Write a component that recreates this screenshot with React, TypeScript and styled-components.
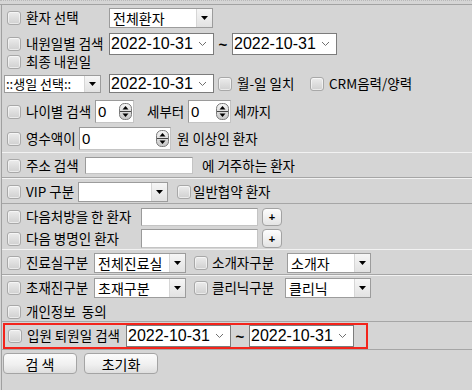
import React from 'react';
import styled, { createGlobalStyle } from 'styled-components';

const Global = createGlobalStyle`
  html, body { margin: 0; padding: 0; background: #d5d5d5; }
  body {
    font-family: "Noto Sans CJK KR", "Noto Sans", sans-serif;
    font-size: 13px;
    color: #000;
  }
`;

const Frame = styled.div`
  width: 472px;
  height: 390px;
  overflow: hidden;
`;

const TopRule = styled.div`
  height: 5px;
  box-sizing: border-box;
  border-top: 1px dotted #b8b8b8;
  border-bottom: 1px solid #a2a2a2;
`;

const Body = styled.div`
  margin-left: 1px;
  border-left: 1px solid #a0a0a0;
  height: 385px;
  display: flex;
  flex-direction: column;
`;

const Row = styled.div<{ $mt: number; $h: number }>`
  display: flex;
  align-items: center;
  flex: none;
  margin-top: ${p => p.$mt}px;
  height: ${p => p.$h}px;
`;

const Sep = styled.div<{ $mt: number; $tone: 'light' | 'groove' | 'dark' }>`
  flex: none;
  margin-top: ${p => p.$mt}px;
  height: 0;
  border-top: 1px solid ${p => (p.$tone === 'light' ? '#f2f2f2' : '#a6a6a6')};
  border-bottom: ${p => (p.$tone === 'groove' ? '1px solid #f2f2f2' : '0')};
`;

const Checkbox = styled.span<{ $ml?: number }>`
  flex: none;
  display: inline-block;
  width: 14px;
  height: 14px;
  box-sizing: border-box;
  margin-left: ${p => p.$ml ?? 5}px;
  border: 1px solid #a8a8a8;
  border-radius: 3px;
  background: linear-gradient(#ececec, #d0d0d0);
  box-shadow: inset 0 0 0 1px rgba(255, 255, 255, 0.55);
`;

const Label = styled.span<{ $w?: number; $ml?: number }>`
  flex: none;
  margin-left: ${p => p.$ml ?? 5}px;
  width: ${p => (p.$w ? `${p.$w}px` : 'auto')};
  font-size: 13.5px;
  line-height: 1;
  white-space: pre;
`;

const SelectBox = styled.div<{ $w: number; $h: number; $ml?: number }>`
  flex: none;
  display: flex;
  align-items: stretch;
  box-sizing: border-box;
  width: ${p => p.$w}px;
  height: ${p => p.$h}px;
  margin-left: ${p => p.$ml ?? 0}px;
  border: 1px solid #9c9c9c;
  background: #fff;
`;

const SelectText = styled.span<{ $size: number; $pl: number }>`
  flex: 1;
  display: flex;
  align-items: center;
  padding-left: ${p => p.$pl}px;
  font-size: ${p => p.$size}px;
  white-space: nowrap;
  overflow: hidden;
`;

const SelectBtn = styled.span`
  flex: none;
  width: 15px;
  display: flex;
  align-items: center;
  justify-content: center;
  border-left: 1px solid #d6d6d6;
  background: linear-gradient(#f6f6f6, #e2e2e2);
`;

const DateBox = styled.div<{ $w: number; $h: number; $ml?: number }>`
  flex: none;
  display: flex;
  align-items: center;
  box-sizing: border-box;
  width: ${p => p.$w}px;
  height: ${p => p.$h}px;
  margin-left: ${p => p.$ml ?? 0}px;
  padding-left: 1px;
  border: 1px solid #7c7c7c;
  background: #fff;
  font-family: "Liberation Sans", Arial, sans-serif;
  font-size: 16px;
`;

const DateText = styled.span`
  flex: 1;
  white-space: nowrap;
`;

const Tilde = styled.span<{ $w: number }>`
  flex: none;
  width: ${p => p.$w}px;
  text-align: center;
  font-family: "Liberation Sans", Arial, sans-serif;
  font-size: 15px;
  font-weight: bold;
`;

const TextInput = styled.div<{ $w: number; $h: number; $ml?: number }>`
  flex: none;
  box-sizing: border-box;
  width: ${p => p.$w}px;
  height: ${p => p.$h}px;
  margin-left: ${p => p.$ml ?? 0}px;
  background: #fff;
  border: 1px solid #c4c4c4;
  border-top-color: #9a9a9a;
  border-left-color: #9a9a9a;
`;

const SpinBox = styled(TextInput)`
  display: flex;
  align-items: center;
  padding: 0 1px 0 2px;
  font-family: "Liberation Sans", Arial, sans-serif;
  font-size: 15px;
`;

const SpinValue = styled.span`
  flex: 1;
  line-height: 1;
`;

const PlusBtn = styled.span<{ $h: number }>`
  flex: none;
  box-sizing: border-box;
  width: 20px;
  height: ${p => p.$h}px;
  margin-left: 4px;
  display: flex;
  align-items: center;
  justify-content: center;
  border: 1px solid #a2a2a2;
  border-radius: 4px;
  background: linear-gradient(#fdfdfd, #e4e4e4);
  font-family: "Liberation Sans", Arial, sans-serif;
  font-size: 11px;
  font-weight: bold;
`;

const RedBox = styled.div`
  flex: none;
  display: flex;
  align-items: center;
  box-sizing: border-box;
  margin-top: 1px;
  margin-left: 1px;
  width: 365px;
  height: 26px;
  border: 2px solid #f3241b;
`;

const Button = styled.span<{ $ml: number }>`
  flex: none;
  box-sizing: border-box;
  width: 74px;
  height: 21px;
  margin-left: ${p => p.$ml}px;
  display: flex;
  align-items: center;
  justify-content: center;
  border: 1px solid #a4a4a4;
  border-radius: 4px;
  background: linear-gradient(#fbfbfb, #f0f0f0 55%, #dedede);
  font-size: 14px;
  white-space: pre;
`;

const Arrow = () => (
  <svg width="7" height="4" viewBox="0 0 7 4">
    <path d="M0 0 L7 0 L3.5 4 Z" fill="#000" />
  </svg>
);

const Chevron = () => (
  <svg width="9" height="6" viewBox="0 0 9 6" style={{ marginRight: 6 }}>
    <polyline points="1,1 4.5,4.5 8,1" fill="none" stroke="#707070" strokeWidth="1" />
  </svg>
);

const Spinner = () => (
  <svg width="13" height="17" viewBox="0 0 13 17">
    <defs>
      <linearGradient id="spg" x1="0" y1="0" x2="0" y2="1">
        <stop offset="0" stopColor="#f6f6f6" />
        <stop offset="1" stopColor="#c6c6c6" />
      </linearGradient>
    </defs>
    <rect x="0.5" y="0.5" width="12" height="16" rx="5" fill="url(#spg)" stroke="#7a7a7a" />
    <line x1="1" y1="8.5" x2="12" y2="8.5" stroke="#444" />
    <path d="M3.5 6.5 L6.5 3 L9.5 6.5 Z" fill="#000" />
    <path d="M3.5 10.5 L6.5 14 L9.5 10.5 Z" fill="#000" />
  </svg>
);

const Select = ({
  w,
  h,
  ml,
  text,
  size = 14,
  pl = 3,
}: {
  w: number;
  h: number;
  ml?: number;
  text: string;
  size?: number;
  pl?: number;
}) => (
  <SelectBox $w={w} $h={h} $ml={ml}>
    <SelectText $size={size} $pl={pl}>{text}</SelectText>
    <SelectBtn>
      <Arrow />
    </SelectBtn>
  </SelectBox>
);

const DateField = ({ w, h, ml }: { w: number; h: number; ml?: number }) => (
  <DateBox $w={w} $h={h} $ml={ml}>
    <DateText>2022-10-31</DateText>
    <Chevron />
  </DateBox>
);

const Spin = ({ w, h, ml }: { w: number; h: number; ml?: number }) => (
  <SpinBox $w={w} $h={h} $ml={ml}>
    <SpinValue>0</SpinValue>
    <Spinner />
  </SpinBox>
);

export default function App() {
  return (
    <Frame>
      <Global />
      <TopRule />
      <Body>
        <Row $mt={3} $h={20}>
          <Checkbox />
          <Label $w={83}>환자 선택</Label>
          <Select w={104} h={20} text="전체환자" />
        </Row>
        <Row $mt={5} $h={22}>
          <Checkbox />
          <Label $w={83}>내원일별 검색</Label>
          <DateField w={105} h={22} />
          <Tilde $w={18}>~</Tilde>
          <DateField w={105} h={22} />
        </Row>
        <Row $mt={0} $h={14}>
          <Checkbox />
          <Label>최종 내원일</Label>
        </Row>
        <Row $mt={5} $h={19}>
          <Select w={97} h={18} ml={2} text="::생일 선택::" size={13} pl={1} />
          <DateField w={105} h={19} ml={8} />
          <Checkbox $ml={4} />
          <Label $w={68}>월-일 일치</Label>
          <Checkbox />
          <Label>CRM음력/양력</Label>
        </Row>
        <Row $mt={7} $h={23}>
          <Checkbox />
          <Label $w={69}>나이별 검색</Label>
          <Spin w={39} h={23} />
          <Label $w={36} $ml={13}>세부터</Label>
          <Spin w={43} h={23} ml={5} />
          <Label $ml={3}>세까지</Label>
        </Row>
        <Row $mt={4} $h={23}>
          <Checkbox />
          <Label $w={53}>영수액이</Label>
          <Spin w={92} h={23} />
          <Label $ml={6}>원 이상인 환자</Label>
        </Row>
        <Sep $mt={2} $tone="light" />
        <Row $mt={3} $h={19}>
          <Checkbox />
          <Label $w={59}>주소 검색</Label>
          <TextInput $w={108} $h={17} />
          <Label $ml={9}>에 거주하는 환자</Label>
        </Row>
        <Sep $mt={2} $tone="groove" />
        <Row $mt={3} $h={20}>
          <Checkbox />
          <Label $w={52}>VIP 구분</Label>
          <Select w={90} h={20} text="" />
          <Checkbox $ml={9} />
          <Label $ml={2}>일반협약 환자</Label>
        </Row>
        <Sep $mt={1} $tone="dark" />
        <Row $mt={4} $h={18}>
          <Checkbox />
          <Label $w={115}>다음처방을 한 환자</Label>
          <TextInput $w={117} $h={18} />
          <PlusBtn $h={18}>+</PlusBtn>
        </Row>
        <Row $mt={3} $h={19}>
          <Checkbox />
          <Label $w={115}>다음 병명인 환자</Label>
          <TextInput $w={117} $h={19} />
          <PlusBtn $h={19}>+</PlusBtn>
        </Row>
        <Sep $mt={1} $tone="light" />
        <Row $mt={3} $h={20}>
          <Checkbox />
          <Label $w={68}>진료실구분</Label>
          <Select w={92} h={20} text="전체진료실" />
          <Checkbox $ml={8} />
          <Label $w={75} $ml={4}>소개자구분</Label>
          <Select w={84} h={20} text="소개자" />
        </Row>
        <Sep $mt={1} $tone="groove" />
        <Row $mt={2} $h={20}>
          <Checkbox />
          <Label $w={68}>초재진구분</Label>
          <Select w={92} h={20} text="초재구분" />
          <Checkbox $ml={8} />
          <Label $w={73} $ml={4}>클리닉구분</Label>
          <Select w={86} h={20} text="클리닉" />
        </Row>
        <Row $mt={6} $h={15}>
          <Checkbox />
          <Label>{'개인정보  동의'}</Label>
        </Row>
        <Sep $mt={2} $tone="dark" />
        <RedBox>
          <Checkbox $ml={3} />
          <Label $w={99}>입원 퇴원일 검색</Label>
          <DateField w={105} h={22} />
          <Tilde $w={18}>~</Tilde>
          <DateField w={105} h={22} />
        </RedBox>
        <Sep $mt={0} $tone="dark" />
        <Row $mt={3} $h={21}>
          <Button $ml={1}>{'검 색'}</Button>
          <Button $ml={7}>초기화</Button>
        </Row>
      </Body>
    </Frame>
  );
}
